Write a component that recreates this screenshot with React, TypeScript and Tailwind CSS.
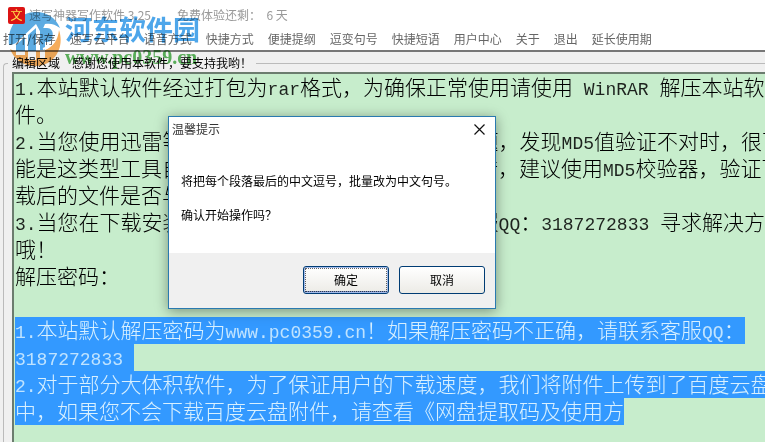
import React from "react";

const menuItems = [
  "打开/保存",
  "速写云平台",
  "语音方式",
  "快捷方式",
  "便捷提纲",
  "逗变句号",
  "快捷短语",
  "用户中心",
  "关于",
  "退出",
  "延长使用期",
];

const lines = [
  { text: "1.本站默认软件经过打包为rar格式，为确保正常使用请使用 WinRAR 解压本站软" },
  { text: "件。" },
  { text: "2.当您使用迅雷等下载工具进行下载时文件出现问题，发现MD5值验证不对时，很可" },
  { text: "能是这类型工具自身的缓存机制导致了文件校验出错，建议使用MD5校验器，验证下" },
  { text: "载后的文件是否与本站提供的一致" },
  { text: "3.当您在下载安装使用过程中遇到问题时请联系客服QQ：3187272833 寻求解决方" },
  { text: "哦！" },
  { text: "解压密码：" },
  { text: "" },
  { text: "1.本站默认解压密码为www.pc0359.cn！如果解压密码不正确，请联系客服QQ：", selected: true },
  { text: "3187272833 ", selected: true },
  { text: "2.对于部分大体积软件，为了保证用户的下载速度，我们将附件上传到了百度云盘", selected: true },
  { text: "中，如果您不会下载百度云盘附件，请查看《网盘提取码及使用方", selected: true },
];

// half-width characters use the narrower mono face
const Line = ({ text, selected }: { text: string; selected?: boolean }) => (
  <div className="h-[27px] whitespace-pre">
    <span className={selected ? "inline-block h-[27px] bg-[#3399ff] text-[#d8f0ff]" : ""}>
      {text.split(/([\x20-\x7e]+)/).map((part, i) =>
        i % 2 ? (
          <span key={i} className="font-['Liberation_Mono'] text-[18px] opacity-85">
            {part}
          </span>
        ) : (
          part
        )
      )}
    </span>
  </div>
);

const Watermark = () => (
  <div className="pointer-events-none absolute top-[9px] left-2 flex gap-1 mix-blend-multiply">
    <svg width="53" height="58" viewBox="0 0 53 58">
      <path d="M1 36C-1 17 11 3 28 3c11 0 20 6 24 16-5-4-10-5-15-4l-4 9-5-9L8 34c-2 1-5 2-7 2z" fill="#5cabe2" />
      <path d="M8 36l9-8v14H8zM20 26l8-7v23h-8zM32 19h7c8 0 8 14 0 14h-2v8h-5z" fill="#5cabe2" />
      <path
        d="M51 21c6 18-5 36-24 36-12 0-21-7-25-17 2 1 4 2 6 2v4h9v-4h3v9h8v-9h4v7h5v-8c8-3 13-10 14-20z"
        fill="#f6ac5a"
      />
      <path d="M46 21c0 10-4 17-11 19" fill="none" stroke="#fff" strokeWidth="2" />
    </svg>
    <div>
      <div className="mt-1 text-[27px] leading-8 font-bold text-[#2f96e6]/85">河东软件园</div>
      <div className="font-['Liberation_Serif'] text-[20px] leading-6 font-bold text-[#35a535]/80">
        www.pc0359.cn
      </div>
    </div>
  </div>
);

const Dialog = () => (
  <div
    role="dialog"
    aria-labelledby="dialogTitle"
    className="absolute top-[116px] left-[168px] w-[328px] border border-[#2a7ab0] bg-white text-[12px] text-black shadow-[0_2px_12px_rgba(0,0,0,0.4)]"
  >
    <div className="flex h-6 items-center justify-between pl-[3px] pr-[10px]">
      <h2 id="dialogTitle" className="text-[#333]">温馨提示</h2>
      <button aria-label="关闭">
        <svg width="11" height="11" viewBox="0 0 11 11" stroke="#111" strokeWidth="1.2">
          <path d="M.5.5l10 10M10.5.5l-10 10" />
        </svg>
      </button>
    </div>
    <div className="flex flex-col gap-4 px-3 pt-[31px] pb-[29px] leading-[18px]">
      <p>将把每个段落最后的中文逗号，批量改为中文句号。</p>
      <p>确认开始操作吗？</p>
    </div>
    <div className="flex justify-end gap-[10px] bg-[#f0f0f0] px-[10px] pt-[13px] pb-[14px]">
      <button className="h-7 w-[86px] rounded-[3px] border border-[#003c74] bg-gradient-to-b from-white to-[#ecebe6] p-px shadow-[inset_0_0_0_1px_#a3bbea,inset_0_-2px_0_#7d92c4]">
        <span className="flex h-full items-center justify-center border border-dotted border-black/60">
          确定
        </span>
      </button>
      <button className="h-7 w-[86px] rounded-[3px] border border-[#003c74] bg-gradient-to-b from-white to-[#ecebe6]">
        取消
      </button>
    </div>
  </div>
);

const App = () => {
  return (
    <div className="relative flex h-screen flex-col overflow-hidden bg-[#f0f0f0] font-['Noto_Sans_CJK_SC',sans-serif] text-[12px] whitespace-nowrap">
      <header className="border-b-2 border-[#777] bg-white">
        <div className="flex h-[30px] items-center pl-2 text-[#999]">
          <svg className="relative z-10" width="17" height="17" viewBox="0 0 17 17">
            <rect width="17" height="17" rx="2" fill="#dc1414" />
            <text x="8.5" y="13" textAnchor="middle" fontSize="12" fill="#ffe14d">
              文
            </text>
          </svg>
          <h1 className="ml-1">速写神器写作软件 3.25</h1>
          <span className="ml-[26px]">免费体验还剩：&nbsp; 6 天</span>
        </div>
        <nav className="flex h-5 items-center gap-[14px] pb-[2px] pl-[3px] text-[#666]">
          {menuItems.map((item) => (
            <button key={item}>{item}</button>
          ))}
        </nav>
      </header>

      <fieldset className="mt-[2px] ml-[3px] flex min-h-0 min-w-0 flex-1 flex-col rounded-tl border border-r-0 border-b-0 border-[#bbb]">
        <legend className="ml-1 px-1 leading-[18px] text-black">编辑区域　感谢您使用本软件，要支持我哟！</legend>
        <div
          role="textbox"
          aria-multiline="true"
          aria-label="编辑区域"
          contentEditable
          suppressContentEditableWarning
          className="ml-2 min-h-0 flex-1 overflow-hidden border-t-2 border-l-2 border-[#6b7c6e] bg-[#c7edcc] pl-px text-[21px] leading-[25px] font-light text-black outline-none"
        >
          {lines.map((line, i) => (
            <Line key={i} {...line} />
          ))}
        </div>
      </fieldset>

      <Watermark />
      <Dialog />
    </div>
  );
};

export default App;
